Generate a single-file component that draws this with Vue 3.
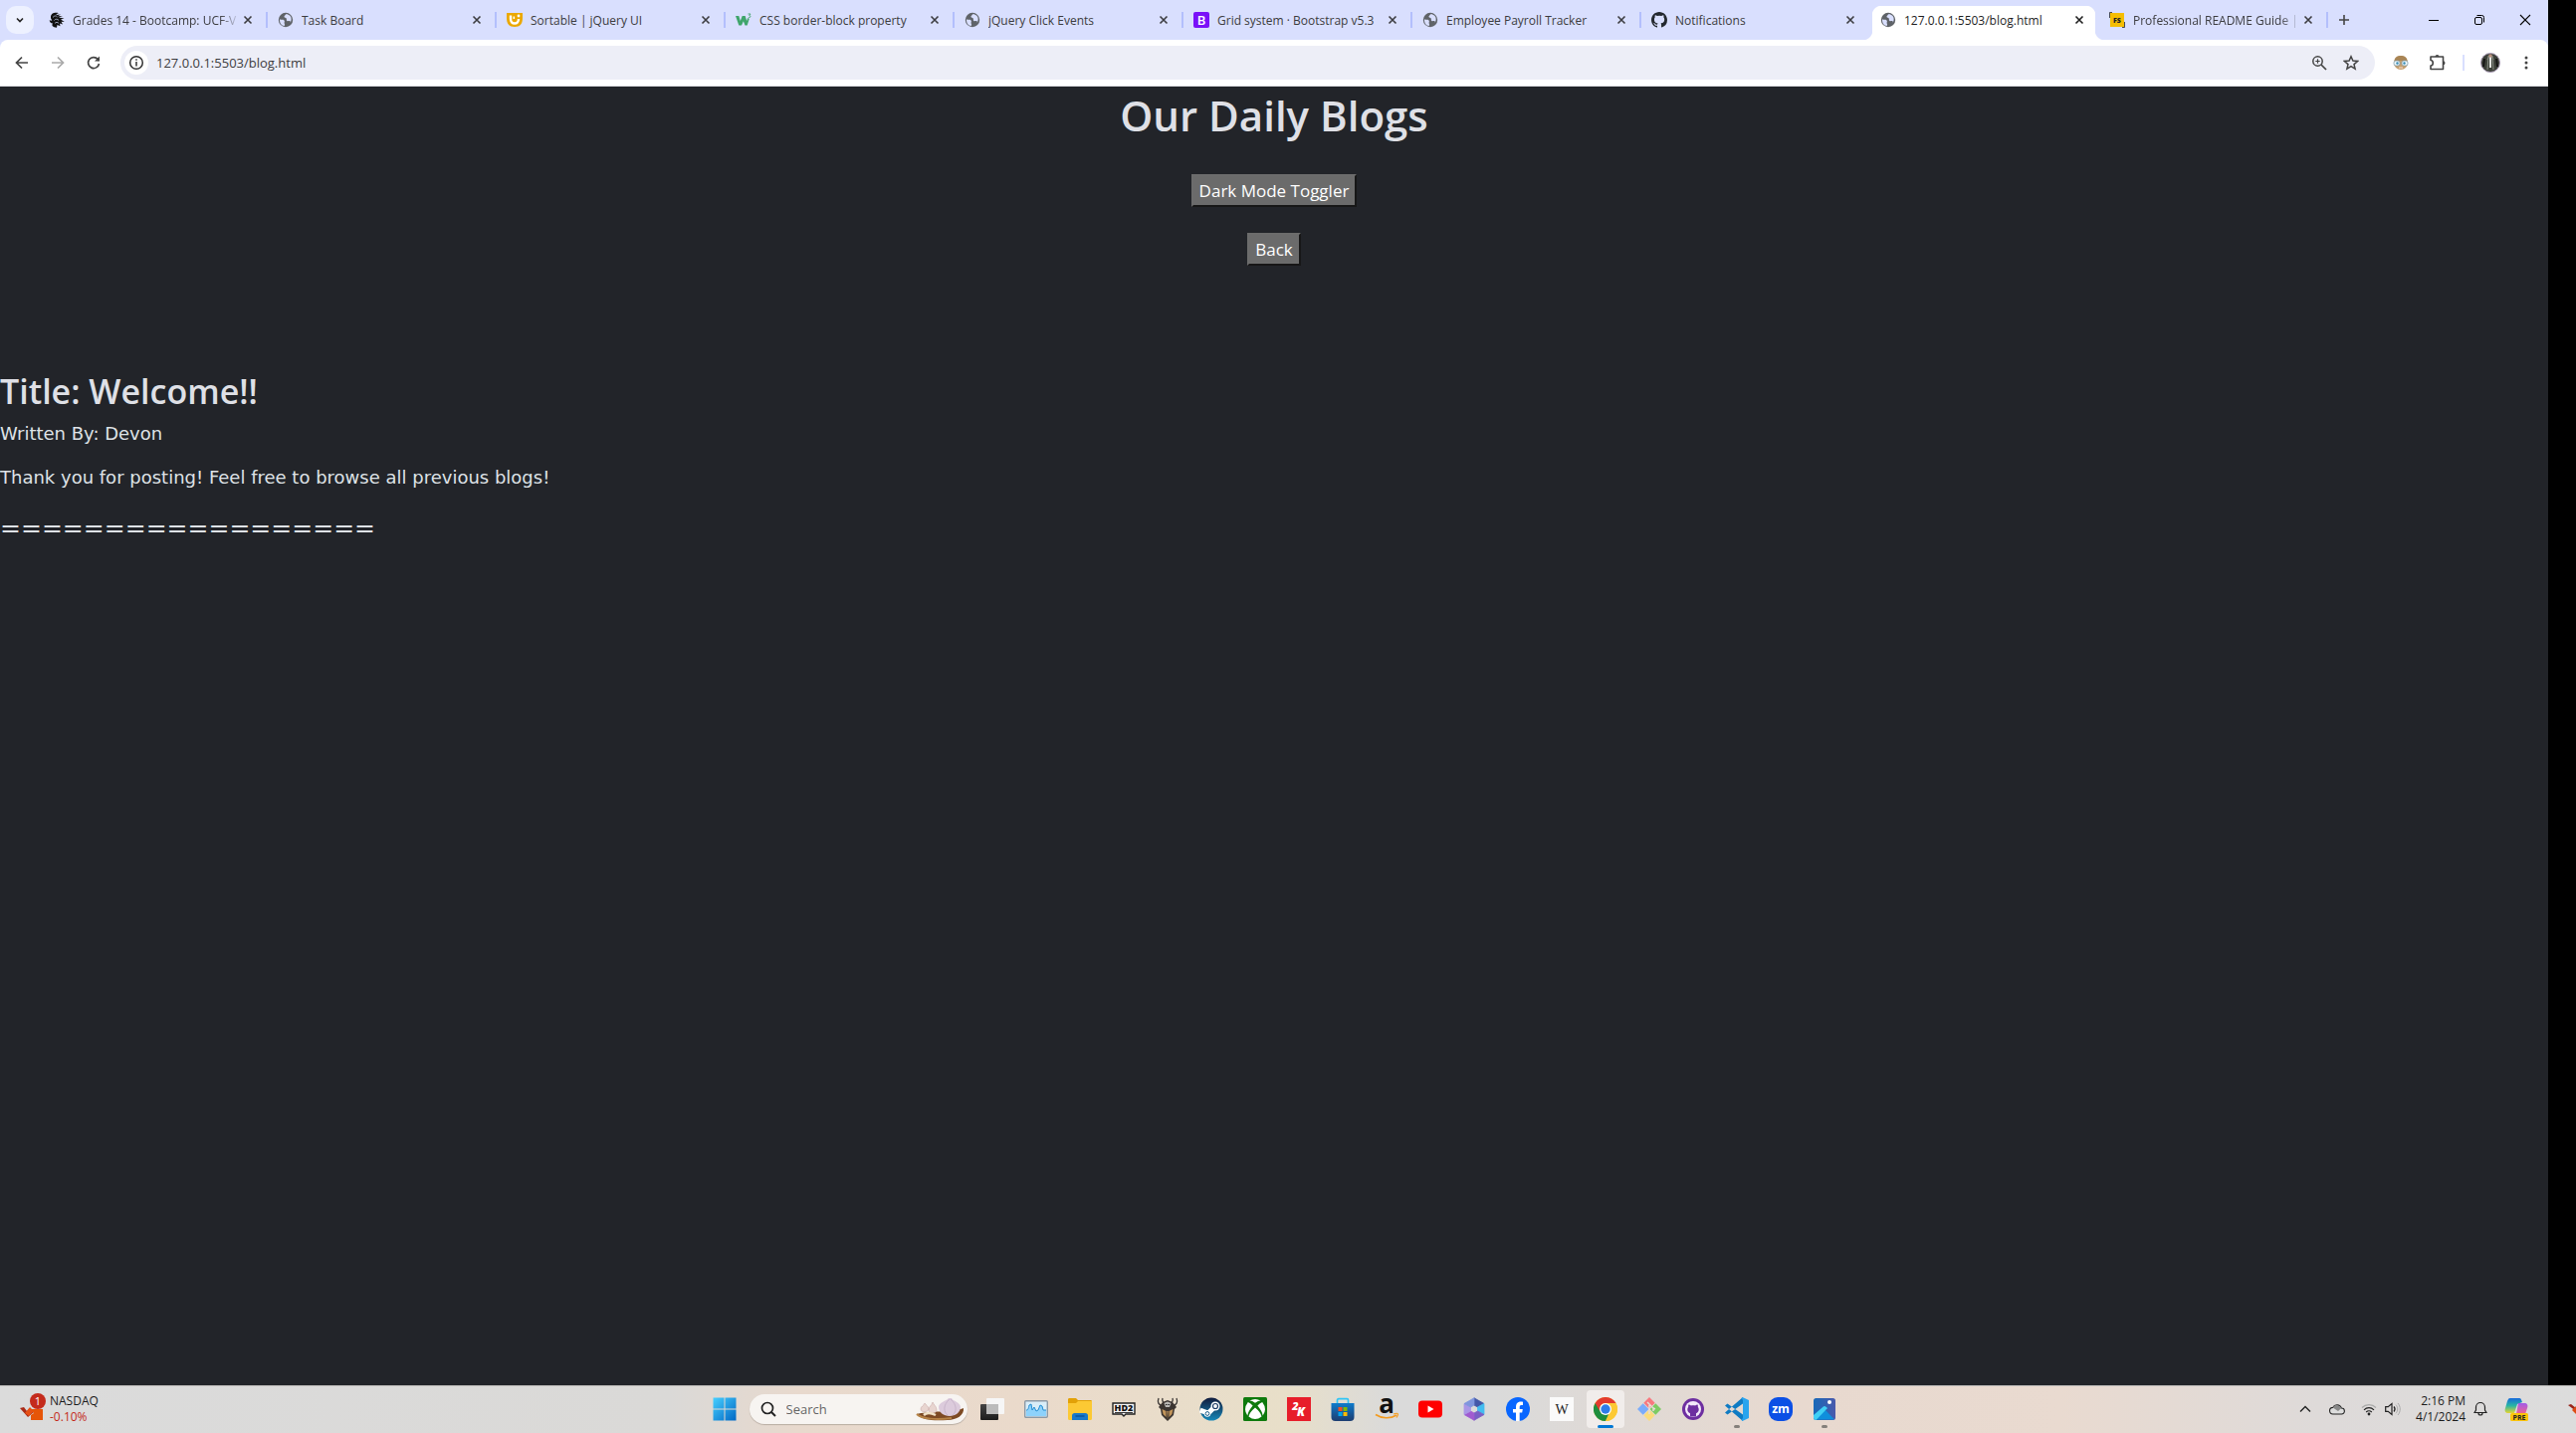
<script setup>
import { ref } from 'vue'

const globe = '<svg viewBox="0 0 16 16"><circle cx="8" cy="8" r="7.2" fill="#5f6368"/><path d="M2 7.2C3.6 8.4 5.4 7 6.6 8.6c.9 1.3-.6 2 .2 3.200.5.9.2 1.700-.2 2.300C3.800 13.600 1.700 11 2 7.200zM8.200 2.200c-.6 1.500-1.900 1.300-1.700 2.800.2 1.100 1.900.6 2.300 1.700.3 1-.3 1.500.6 2.200 1.100.7 1.900-.5 3 .3.5.4.4 1.200.2 1.700 1.500-2.200 1.500-5.200-.3-7.100-1.200-1.200-2.600-1.800-4.100-1.600z" fill="#d9dffe"/></svg>'

const tabs = [
  { title: 'Grades 14 - Bootcamp: UCF-V', clipped: true, icon: '<svg viewBox="0 0 16 16"><path d="M2 5C2 1.500 6 0 10 1.200 8.500 1.500 7.500 2.200 7.500 3L12 2.600 9 4.200 14 4 10 5.600 15.500 6.500 12 7.500 15.800 10 12.500 9.800 14 12.500 11 11.600 11.500 14.300 8.500 13 8 15.800C4 15.500 2.500 13.500 4 11.500 2 11.300.5 10 .8 8c1 .9 2 .7 2.500.2C2.300 7.300 1.900 6.200 2 5z" fill="#111"/><path d="M4 5.500c1.500-2 3.500-2 4.500-.5M5.500 8.500c1-1.800 3.500-1.600 4.500 0M6 11.500c1-1.500 3-1.500 4 0" stroke="#cfd5f2" stroke-width=".7" fill="none"/></svg>' },
  { title: 'Task Board', icon: globe },
  { title: 'Sortable | jQuery UI', icon: '<svg viewBox="0 0 16 16"><path d="M0 1h16v5c0 6-2.500 9-8 9S0 12 0 6z" fill="#eba800"/><path d="M4 3.500v3.500c0 3 1.500 4.500 4 4.500s4-1.500 4-4.500" stroke="#fff" stroke-width="2.400" fill="none"/><circle cx="12" cy="4" r="1.400" fill="#fff"/><path d="M7.300 4.500V7" stroke="#fff" stroke-width="1.500"/></svg>' },
  { title: 'CSS border-block property', icon: '<svg viewBox="0 0 16 16"><path d="M0 4h3.300l1.500 5L6.700 4h3l1.500 5 1-3 1.500 1-2 6.500H9.500L7.900 9.300l-1.900 4.200H3.300z" fill="#3fa56b"/><path d="M12.500 2h2.500l-1.200 1.700c1.600 0 1.500 2.300-.9 2" fill="none" stroke="#3fa56b" stroke-width=".9"/></svg>' },
  { title: 'jQuery Click Events', icon: globe },
  { title: 'Grid system · Bootstrap v5.3', icon: '<svg viewBox="0 0 16 16"><rect width="16" height="16" rx="2" fill="#7a11f8"/><text x="8" y="12.500" text-anchor="middle" font-family="Open Sans, sans-serif" font-size="13" font-weight="600" fill="#fff">B</text></svg>' },
  { title: 'Employee Payroll Tracker', icon: globe },
  { title: 'Notifications', icon: '<svg viewBox="0 0 16 16"><path fill="#24292f" d="M8 0C3.580 0 0 3.580 0 8c0 3.540 2.290 6.530 5.470 7.590.4.070.55-.17.55-.38v-1.500c-2.230.5-2.700-1-2.700-1-.36-.93-.9-1.200-.9-1.200-.7-.5.1-.5.1-.5.800.06 1.230.830 1.230.830.720 1.230 1.880.870 2.350.670.070-.53.280-.88.500-1.080-1.770-.2-3.640-.89-3.640-3.950 0-.87.310-1.590.820-2.150-.08-.2-.36-1.020.080-2.120 0 0 .67-.21 2.200.820a7.500 7.500 0 0 1 4 0c1.530-1.040 2.200-.82 2.200-.82.440 1.100.160 1.920.080 2.120.510.560.820 1.270.820 2.150 0 3.070-1.870 3.750-3.650 3.950.290.250.540.730.540 1.480v2.200c0 .210.150.460.550.380A8 8 0 0 0 16 8c0-4.420-3.580-8-8-8z"/></svg>' },
  { title: '127.0.0.1:5503/blog.html', active: true, icon: globe },
  { title: 'Professional README Guide |', clipped: true, icon: '<svg viewBox="0 0 16 16"><rect x="1" y="1" width="14" height="14" fill="#f5bd02"/><path d="M3 .5H.5V6M13 15.500h2.500V10" stroke="#222" stroke-width=".8" fill="none"/><text x="8" y="10.500" text-anchor="middle" font-family="Open Sans, sans-serif" font-size="7" font-weight="800" fill="#222">FS</text></svg>' },
]

const url = ref('127.0.0.1:5503/blog.html')
const dark = ref(true)

const apps = [
  { name: 'Task view', icon: '<svg viewBox="0 0 24 24"><defs><linearGradient id="tv" x2="0" y2="1"><stop stop-color="#444"/><stop offset="1" stop-color="#1c1c1c"/></linearGradient></defs><rect y="7" width="18" height="16" rx="1" fill="url(#tv)"/><rect x="6" y="1" width="18" height="16" rx="1" fill="#f6f6f6"/><path d="M6 7h12v10H6z" fill="#bbb"/></svg>' },
  { name: 'Task Manager', icon: '<svg viewBox="0 0 24 24"><rect x=".7" y="3.700" width="22.600" height="16.600" rx="1" fill="#d9edf8" stroke="#8d9aa5" stroke-width="1.400"/><path d="M2 13c2 0 2-1 3-5l2-1 1 6 2-3 2 4 2-1 2-5 2 1 1 4 3 0v6H2z" fill="#8ed2fb"/><path d="M2 13c2 0 2-1 3-5l2-1 1 6 2-3 2 4 2-1 2-5 2 1 1 4 3 0" fill="none" stroke="#258ed2"/></svg>' },
  { name: 'File Explorer', icon: '<svg viewBox="0 0 24 24"><path d="M0 2.500C0 1.500.5 1 1.500 1H8l2 2h12.500c1 0 1.500.5 1.500 1.500V9H0z" fill="#e2a106"/><path d="M0 6h8l2-2h14v17.500c0 .8-.5 1.500-1.500 1.500h-21C.5 23 0 22.300 0 21.500z" fill="#fcc934"/><path d="M4 23v-4.500C4 17 5 16 6.500 16h11c1.500 0 2.500 1 2.500 2.500V23z" fill="#1979c9"/><path d="M7.500 19h9" stroke="#0b559b" stroke-width="1.500"/></svg>' },
  { name: 'HELLDIVERS 2', icon: '<svg viewBox="0 0 24 24"><path d="M1 6h22v11h-9l-2 2-2-2H1z" fill="#f5f5f5" stroke="#222" stroke-width="1.400"/><text x="12" y="14" text-anchor="middle" font-family="Open Sans, sans-serif" font-size="9" font-weight="800" fill="#111">HD2</text><path d="M3 15.500h18" stroke="#222" stroke-width=".9"/></svg>' },
  { name: 'Game', icon: '<svg viewBox="0 0 24 24"><path d="M3 1c-1.500 4 0 7 4 8M21 1c1.500 4 0 7-4 8M7 1c-.5 2 0 4 2 5M17 1c.5 2 0 4-2 5" fill="none" stroke="#3b3634" stroke-width="1.300"/><path d="M7 5l5-2 5 2 4 5-2 2-1 6-6 6-6-6-1-6-2-2z" fill="#3b3430"/><path d="M6.500 12l4 2v6l-3-3zM17.500 12l-4 2v6l3-3zM11.300 14h1.400L12 23z" fill="#c2955a"/><path d="M8.500 6l3.500-1.500L15.500 6l-1.500 4h-4z" fill="#b9b6b3"/><path d="M10 7.500h1.500M12.500 7.500H14" stroke="#222"/></svg>' },
  { name: 'Steam', icon: '<svg viewBox="0 0 24 24"><defs><linearGradient id="st" x2="0" y2="1"><stop stop-color="#101a3b"/><stop offset="1" stop-color="#1788b9"/></linearGradient></defs><circle cx="12" cy="12" r="11.500" fill="url(#st)"/><path d="M.7 13l8 3M8 17l8-8" stroke="#fff" stroke-width="5" fill="none"/><circle cx="16" cy="9" r="4.500" fill="#fff"/><circle cx="16" cy="9" r="2.500" fill="#fff" stroke="#1c3c65" stroke-width="1.200"/><circle cx="8" cy="16.500" r="3.200" fill="#fff"/><circle cx="8" cy="16.500" r="1.900" fill="none" stroke="#1c5d88"/></svg>' },
  { name: 'Xbox', icon: '<svg viewBox="0 0 24 24"><rect width="24" height="24" rx="1.500" fill="#0e7a0d"/><path d="M6.500 3.500Q12 .5 17.500 3.500 15 3.500 12 5.800 9 3.500 6.500 3.500zM4.800 5Q7 5.500 9.600 8.500 5 14 4.300 18.500-.5 12 4.800 5zM19.200 5Q17 5.500 14.400 8.500 19 14 19.700 18.500 24.500 12 19.200 5zM12 10.500Q18 15.500 18.500 19.500 12 24.500 5.500 19.500 6 15.500 12 10.500z" fill="#fff"/></svg>' },
  { name: 'NBA 2K', icon: '<svg viewBox="0 0 24 24"><rect width="24" height="24" fill="#e71d2a"/><text x="8.500" y="12.500" text-anchor="middle" font-family="Open Sans, sans-serif" font-size="11" font-weight="800" font-style="italic" fill="#fff">2</text><text x="14" y="18.500" text-anchor="middle" font-family="Open Sans, sans-serif" font-size="12" font-weight="800" font-style="italic" fill="#fff">K</text></svg>' },
  { name: 'Microsoft Store', icon: '<svg viewBox="0 0 24 24"><defs><linearGradient id="ms" x2="0" y2="1"><stop stop-color="#0e7bcb"/><stop offset="1" stop-color="#1d3d70"/></linearGradient></defs><path d="M6.500 7V3c0-.8.5-1.300 1.300-1.300h8.400c.8 0 1.300.5 1.300 1.300v4" fill="none" stroke="#30c5f5" stroke-width="1.700"/><path d="M.5 6h23v14a4 4 0 0 1-4 4h-15a4 4 0 0 1-4-4z" fill="url(#ms)"/><path d="M7.500 10h4v4h-4z" fill="#f25022"/><path d="M12.500 10h4v4h-4z" fill="#7fba00"/><path d="M7.500 15h4v4h-4z" fill="#00a4ef"/><path d="M12.500 15h4v4h-4z" fill="#ffb900"/></svg>' },
  { name: 'Amazon', icon: '<svg viewBox="0 0 24 24"><text x="12" y="16" text-anchor="middle" font-family="Open Sans, sans-serif" font-size="26" font-weight="700" fill="#111">a</text><path d="M1 17.500c6 4 15 4.500 21 .5" stroke="#f39b1f" stroke-width="1.600" fill="none"/><path d="M19 17c2-.7 4-.8 4.300-.3.300.6-.3 2.300-1.300 3.800" stroke="#f39b1f" stroke-width="1.200" fill="none"/></svg>' },
  { name: 'YouTube', icon: '<svg viewBox="0 0 24 24"><rect y="3.500" width="24" height="17" rx="4" fill="#f00"/><path d="M9.500 8.500l6 3.500-6 3.500z" fill="#fff"/></svg>' },
  { name: 'Microsoft 365', icon: '<svg viewBox="0 0 24 24"><g stroke-width=".8" stroke-linejoin="round"><path d="M12 .8L22 6.500l-6.500 3.500L12 8z" fill="#4358a8" stroke="#4358a8"/><path d="M22 6.500v11L15.500 14v-4z" fill="#43bdf0" stroke="#43bdf0"/><path d="M22 17.500L12 23.200V16l3.500-2z" fill="#7a5fc4" stroke="#7a5fc4"/><path d="M12 23.200L2 17.500 8.500 14l3.500 2z" fill="#a05bd0" stroke="#a05bd0"/><path d="M2 17.500v-11L8.500 10v4z" fill="#a996e6" stroke="#a996e6"/><path d="M2 6.500L12 .8V8l-3.500 2z" fill="#7f95dd" stroke="#7f95dd"/></g></svg>' },
  { name: 'Facebook', icon: '<svg viewBox="0 0 24 24"><circle cx="12" cy="12" r="12" fill="#0866ff"/><path d="M10 24v-8.500H7V12h3v-2c0-4 1.800-5.500 5-5.500.9 0 1.500.1 2 .2V8c-2.500-.2-3.300.3-3.300 2v2h3.100l-.6 3.500h-2.500V24z" fill="#fff"/></svg>' },
  { name: 'Wikipedia', icon: '<svg viewBox="0 0 24 24"><rect width="24" height="24" fill="#fafafa"/><text x="12" y="17" text-anchor="middle" font-family="Liberation Serif, serif" font-size="14" fill="#222">W</text></svg>' },
  { name: 'Google Chrome', active: true, icon: '<svg viewBox="0 0 24 24"><circle cx="12" cy="12" r="12" fill="#fcc934"/><path d="M12 12L1.600 6A12 12 0 0 0 12 24l5.200-9z" fill="#1e8e3e"/><path d="M12 12h5.200L12 24A12 12 0 0 0 22.400 6H12z" fill="#fcc934"/><path d="M1.600 6A12 12 0 0 1 22.400 6H12a6 6 0 0 0-5.200 9z" fill="#e33b2e"/><circle cx="12" cy="12" r="6" fill="#fff"/><circle cx="12" cy="12" r="4.700" fill="#2e7de9"/></svg>' },
  { name: 'Git Bash', icon: '<svg viewBox="0 0 24 24"><path d="M12 0l5.700 5.700L12 11.400 6.300 5.700z" fill="#f8787e"/><path d="M18.300 6.300L24 12l-5.700 5.700-5.700-5.700z" fill="#7dcb63"/><path d="M12 12.600l5.700 5.700L12 24l-5.700-5.700z" fill="#fbdc7c"/><path d="M5.700 6.300l5.700 5.700-5.700 5.700L0 12z" fill="#7bacfa"/><path d="M10 5l6 6v3M16 11l2 1M12 8v9" stroke="#e6dbd6" stroke-width="1.500" fill="none"/></svg>' },
  { name: 'GitHub Desktop', icon: '<svg viewBox="0 0 24 24"><circle cx="12" cy="12" r="11" fill="#6d2ea0"/><circle cx="12" cy="12" r="8" fill="#f3e9fa"/><path d="M9 19.500v-3.300c-2-.8-2.700-2-2.700-3.900 0-1 .3-1.800.9-2.500-.2-.8-.1-1.600.2-2.400 1 0 1.800.5 2.500 1 1.400-.3 2.800-.3 4.200 0 .7-.5 1.500-1 2.500-1 .3.800.4 1.600.2 2.400.6.7.9 1.500.9 2.500 0 1.900-.7 3.100-2.700 3.900v3.300z" fill="#6d2ea0"/></svg>' },
  { name: 'Visual Studio Code', open: true, icon: '<svg viewBox="0 0 24 24"><path d="M0 8.500L2.500 6.500 18 17.500V24zM0 15.500l2.500 2L18 6.500V0z" fill="#0f7bc3"/><path d="M17.500 0L24 3v18l-6.500 3-1-1 1.500-2V3l-1.500-2z" fill="#29a4ee"/></svg>' },
  { name: 'Zoom', icon: '<svg viewBox="0 0 24 24"><rect width="24" height="24" rx="9" fill="#0b4fe5"/><text x="12" y="16" text-anchor="middle" font-family="Open Sans, sans-serif" font-size="12" font-weight="700" fill="#fff">zm</text></svg>' },
  { name: 'Photos', open: true, icon: '<svg viewBox="0 0 24 24"><defs><linearGradient id="ph" x2="1"><stop stop-color="#1768b8"/><stop offset="1" stop-color="#4a5aac"/></linearGradient></defs><rect x="1" y="1" width="22" height="22" rx="2.500" fill="url(#ph)"/><path d="M2.500 22.500L12 12l10 10.500z" fill="#0f8fdc"/><path d="M1 18l9.500-8.300c1-.8 2-.8 3 0L15 11 3.500 23C2 23 1 22 1 20.500z" fill="#40d0f5"/><circle cx="17" cy="5" r="2" fill="#fff"/></svg>' },
]
</script>

<template>
  <div class="screen">
    <div class="desktop">
      <div class="browser">
        <header class="tabstrip">
          <button class="tab-search" aria-label="Search tabs">
            <svg width="8" height="8" viewBox="0 0 8 8"><path d="M1 2.500l3 3 3-3" fill="none" stroke="#222" stroke-width="1.600" /></svg>
          </button>
          <nav class="tabs">
            <div v-for="tab in tabs" :key="tab.title" class="tab" :class="{ active: tab.active, clipped: tab.clipped }">
              <button class="tab-main">
                <span class="favicon" v-html="tab.icon"></span>
                <span class="tab-title">{{ tab.title }}</span>
              </button>
              <button class="tab-close" aria-label="Close tab">
                <svg width="10" height="10" viewBox="0 0 10 10"><path d="M1.500 1.500l7 7m0-7l-7 7" stroke="currentColor" stroke-width="1.600" /></svg>
              </button>
            </div>
          </nav>
          <button class="new-tab" aria-label="New tab">
            <svg width="12" height="12" viewBox="0 0 12 12"><path d="M6 1v10M1 6h10" stroke="#444" stroke-width="1.600" /></svg>
          </button>
          <div class="window-controls">
            <button aria-label="Minimize"><svg width="12" height="12" viewBox="0 0 12 12"><path d="M1 6.500h10" stroke="#000" /></svg></button>
            <button aria-label="Restore"><svg width="12" height="12" viewBox="0 0 12 12"><rect x="1.500" y="3.500" width="7" height="7" rx="1.500" fill="none" stroke="#000" /><path d="M3.500 1.500H8.500a2 2 0 0 1 2 2V8.500" fill="none" stroke="#000" /></svg></button>
            <button aria-label="Close"><svg width="12" height="12" viewBox="0 0 12 12"><path d="M1 1l10 10M11 1L1 11" stroke="#000" stroke-width="1.100" /></svg></button>
          </div>
        </header>

        <div class="toolbar">
          <div class="nav-buttons">
            <button aria-label="Back"><svg width="16" height="16" viewBox="0 0 16 16"><path d="M14 8H3M8 2.500L2.500 8 8 13.500" fill="none" stroke="#444" stroke-width="1.700" /></svg></button>
            <button aria-label="Forward"><svg width="16" height="16" viewBox="0 0 16 16"><path d="M2 8h11M8 2.500L13.500 8 8 13.500" fill="none" stroke="#aaa" stroke-width="1.700" /></svg></button>
            <button aria-label="Reload"><svg width="16" height="16" viewBox="0 0 16 16"><path d="M13.500 9a5.500 5.500 0 1 1-1.300-4.600L13.500 6" fill="none" stroke="#444" stroke-width="1.700" /><path d="M14 1.500V6.500H9z" fill="#444" /></svg></button>
          </div>
          <div class="omnibox">
            <button class="site-info" aria-label="View site information">
              <svg width="16" height="16" viewBox="0 0 16 16"><circle cx="8" cy="8" r="6.300" fill="none" stroke="#333" stroke-width="1.500" /><path d="M8 7v4.500M8 4.300v1.500" stroke="#333" stroke-width="1.500" /></svg>
            </button>
            <input v-model="url" class="address" aria-label="Address" />
            <button aria-label="Zoom"><svg width="16" height="16" viewBox="0 0 16 16"><circle cx="6.500" cy="6.500" r="4.700" fill="none" stroke="#444" stroke-width="1.500" /><path d="M10 10l5 5" stroke="#444" stroke-width="1.700" /><path d="M6.500 4.300v4.400M4.300 6.500h4.400" stroke="#444" stroke-width="1.200" /></svg></button>
            <button aria-label="Bookmark"><svg width="16" height="16" viewBox="0 0 16 16"><path d="M8 1.800l1.900 4.300 4.700.4-3.600 3.100 1.100 4.600L8 11.700l-4.100 2.500L5 9.600 1.400 6.500l4.700-.4z" fill="none" stroke="#444" stroke-width="1.500" /></svg></button>
          </div>
          <div class="extensions">
            <button aria-label="Extension">
              <svg width="16" height="16" viewBox="0 0 16 16"><circle cx="8" cy="8" r="7" fill="#c5a06f" /><path d="M1.500 6C2 2 5 1 8 1s6 1 6.500 5z" fill="#a98555" /><rect x="1" y="6" width="6" height="5" rx="2" fill="#eef7fb" stroke="#7b98a8" stroke-width=".7" /><rect x="9" y="6" width="6" height="5" rx="2" fill="#eef7fb" stroke="#7b98a8" stroke-width=".7" /><circle cx="4.500" cy="8.500" r="1.200" fill="#378cb4" /><circle cx="11.500" cy="8.500" r="1.200" fill="#378cb4" /><path d="M6 13h4" stroke="#e7c9b0" stroke-width="1.500" /></svg>
            </button>
            <button aria-label="Extensions"><svg width="18" height="18" viewBox="0 0 18 18"><path d="M2 3h12.500v12.500H2V12c3 0 3-5.500 0-5.500z" fill="none" stroke="#444" stroke-width="1.600" stroke-linejoin="round" /><path d="M6.500 3a2 2 0 0 1 4 0zM14.500 7.200a2 2 0 0 1 0 4z" fill="#444" /></svg></button>
          </div>
          <span class="divider"></span>
          <button class="profile" aria-label="Profile">
            <svg width="20" height="20" viewBox="0 0 20 20"><circle cx="10" cy="10" r="9.500" fill="#3c4038" stroke="#a99bb5" /><path d="M7 7l2-4M13 7l-2-4M8 3l-1 14M12 3l1 14" stroke="#8b9088" stroke-width="1" /><path d="M10 2v13" stroke="#e2e4e0" stroke-width="2" /><path d="M4 6l-1 8M16 6l1 8" stroke="#151515" stroke-width="2" /><circle cx="10" cy="3" r="1.800" fill="#b58f7d" /></svg>
          </button>
          <button class="menu" aria-label="Menu"><svg width="4" height="16" viewBox="0 0 4 16"><g fill="#444"><circle cx="2" cy="3" r="1.500" /><circle cx="2" cy="8" r="1.500" /><circle cx="2" cy="13" r="1.500" /></g></svg></button>
        </div>

        <main class="page">
          <div class="intro">
            <h1>Our Daily Blogs</h1>
            <button class="page-button" @click="dark = !dark">Dark Mode Toggler</button>
            <button class="page-button">Back</button>
          </div>
          <article class="post">
            <h2>Title: Welcome!!</h2>
            <p>Written By: Devon</p>
            <p>Thank you for posting! Feel free to browse all previous blogs!</p>
            <p class="rule">==================</p>
          </article>
        </main>
      </div>
    </div>

    <footer class="taskbar">
      <button class="widget">
        <span class="widget-icon">
          <svg width="26" height="24" viewBox="0 0 26 24"><path d="M1 11l4-1 3 4 3-3 4 4-6 5z" fill="#a92b17" /><path d="M6 16l5-6 4 4-5 5z" fill="#e65014" /><path d="M12 23V18l3-2-3-4h12v11z" fill="#e65508" /></svg>
          <span class="badge">1</span>
        </span>
        <span class="widget-text">NASDAQ<span class="loss">-0.10%</span></span>
      </button>

      <div class="apps">
        <button class="app" aria-label="Start">
          <svg width="24" height="24" viewBox="0 0 24 24"><defs><linearGradient id="win" x2="1" y2="1"><stop stop-color="#48d0ff" /><stop offset="1" stop-color="#0067c4" /></linearGradient></defs><path d="M.5.500h11v11H.5zM12.500.500h11v11h-11zM.5 12.500h11v11H.5zM12.500 12.500h11v11h-11z" fill="url(#win)" /></svg>
        </button>
        <label class="search">
          <svg width="16" height="16" viewBox="0 0 16 16"><circle cx="7" cy="7" r="5.500" fill="none" stroke="#222" stroke-width="1.700" /><path d="M11 11l4 4" stroke="#222" stroke-width="2" /></svg>
          <input type="search" placeholder="Search" aria-label="Search" />
          <svg width="50" height="26" viewBox="0 0 50 26"><path d="M1 18c10-3 38-2 47-6 1 7-7 12-16 12-15 1-26 0-31-6z" fill="#7d4a24" /><path d="M1 18c5 5 20 6 35 4" fill="none" stroke="#b58246" stroke-width="2" /><path d="M5 13c0-3 3-3 4-6 1 2 4 3 4 6s-8 4-8 0zM13 14c0-4 3-4 4-8 1 3 4 4 4 8s-8 4-8 0z" fill="#e8d5d0" stroke="#c9aba9" stroke-width=".6" /><path d="M23 11c0-5 8-6 10-9h3c1 3 9 4 9 9s-5 9-11 9-11-4-11-9z" fill="#dccbdc" /><path d="M34 3c-7 6-6 13-2 16M35 3c7 6 6 13 2 16" fill="none" stroke="#c3aec5" stroke-width=".8" /><path d="M8 19c3-3 8-2 12 0" stroke="#f1e2c8" stroke-width="2.500" fill="none" /></svg>
        </label>
        <button v-for="app in apps" :key="app.name" class="app" :class="{ active: app.active, open: app.open }" :aria-label="app.name">
          <span class="app-icon" v-html="app.icon"></span>
        </button>
      </div>

      <div class="tray">
        <button aria-label="Show hidden icons"><svg width="12" height="12" viewBox="0 0 12 12"><path d="M1 8.500l5-5 5 5" fill="none" stroke="#222" stroke-width="1.400" /></svg></button>
        <button aria-label="OneDrive"><svg width="16" height="12" viewBox="0 0 16 12"><path d="M4 11a3.300 3.300 0 0 1-.3-6.600A4.700 4.700 0 0 1 12.300 5 3 3 0 0 1 12.500 11z" fill="#ddd" stroke="#222" stroke-width="1.100" /><path d="M3.700 4.400A4.700 4.700 0 0 1 12.300 5L9 8z" fill="#888" /></svg></button>
        <button class="net">
          <svg width="16" height="16" viewBox="0 0 16 16" aria-label="Wi-Fi"><g fill="none" stroke-width="1.200"><path d="M1 6.500a10 10 0 0 1 14 0" stroke="#aaa" /><path d="M3 8.800a7 7 0 0 1 10 0M5.200 11a4 4 0 0 1 5.600 0" stroke="#222" /></g><circle cx="8" cy="13" r="1.400" fill="#222" /></svg>
          <svg width="16" height="16" viewBox="0 0 16 16" aria-label="Volume"><path d="M.7 5.700h2.500L7 2.500v11l-3.800-3.200H.7z" fill="none" stroke="#222" stroke-width="1.200" /><path d="M9 5.500c1.300 1.500 1.300 3.500 0 5" fill="none" stroke="#222" stroke-width="1.200" /><path d="M11 3.700c2.300 2.500 2.300 6 0 8.600M13 2c3 3.500 3 8.500 0 12" fill="none" stroke="#aaa" /></svg>
        </button>
        <button class="clock"><span>2:16 PM</span><span>4/1/2024</span></button>
        <button class="bell" aria-label="Notifications"><svg width="14" height="16" viewBox="0 0 14 16"><path d="M1 11.500L2.500 9V6a4.500 4.500 0 0 1 9 0v3l1.500 2.500zM5 12a2 2 0 0 0 4 0" fill="none" stroke="#222" stroke-width="1.200" /></svg></button>
        <button class="copilot" aria-label="Copilot">
          <svg width="24" height="24" viewBox="0 0 24 24"><defs><linearGradient id="cp" x2="0" y2="1"><stop stop-color="#1769da" /><stop offset=".5" stop-color="#28b5a5" /><stop offset="1" stop-color="#e8d530" /></linearGradient><linearGradient id="cq" x2="0" y2="1"><stop stop-color="#a15bea" /><stop offset="1" stop-color="#f2668b" /></linearGradient></defs><path d="M6 1h9c2 0 2 2 3 4l-5 2-3 9H4c-3 0-4-2-3-5l2-7c1-2 1-3 3-3z" fill="url(#cp)" /><path d="M14 6h6c3 0 4 2 3 5l-2 6h-9z" fill="url(#cq)" /><rect x="6" y="16" width="18" height="8" rx="1.500" fill="#fdc50a" /><text x="15" y="22.500" text-anchor="middle" font-family="Open Sans, sans-serif" font-size="7" font-weight="700" fill="#222">PRE</text></svg>
        </button>
        <svg class="next-widget" width="8" height="12" viewBox="0 0 8 12"><path d="M0 2l3-1 5 4v3z" fill="#98251a" /><path d="M4 7l4-4v8z" fill="#dd4c14" /></svg>
      </div>
    </footer>
  </div>
</template>

<style>
body {
  margin: 0;
  background: #000;
}
</style>

<style scoped>
.screen {
  display: flex;
  flex-direction: column;
  min-height: 100vh;
  font-family: "Open Sans", "Noto Sans", sans-serif;
  font-size: 12px;
  color: #3c3c40;
}
button {
  display: flex;
  align-items: center;
  justify-content: center;
  flex-shrink: 0;
  padding: 0;
  border: 0;
  background: none;
  font: inherit;
  color: inherit;
}
svg {
  display: block;
  flex-shrink: 0;
}
input {
  min-width: 0;
  padding: 0;
  border: 0;
  outline: 0;
  background: none;
  font: inherit;
}
.desktop {
  display: flex;
  flex: 1;
  padding-right: 28px;
  background: #000;
}
.browser {
  display: flex;
  flex: 1;
  flex-direction: column;
  min-width: 0;
  background: #d9dffe;
}

.tabstrip {
  display: flex;
  align-items: center;
  height: 40px;
  padding-left: 6px;
}
.tab-search {
  width: 28px;
  height: 28px;
  margin-right: 4px;
  border-radius: 10px;
  background: #edf1ff;
}
.tabs {
  display: flex;
  flex: 0 1 2300px;
  min-width: 0;
}
.tab {
  position: relative;
  display: flex;
  flex: 1;
  align-items: center;
  min-width: 0;
  height: 40px;
  padding: 0 11px;
}
.tab::after {
  content: "";
  position: absolute;
  top: 12px;
  right: -1px;
  width: 2px;
  height: 16px;
  background: #b3bffc;
}
.tab.active::after,
.tab:has(+ .active)::after {
  display: none;
}
.tab.active {
  color: #1f1f1f;
}
.tab.active::before {
  content: "";
  position: absolute;
  inset: 6px -7px 0;
  background:
    radial-gradient(circle at 0 0, transparent 10px, #fff 11px) 0 100% / 10px 10px no-repeat,
    radial-gradient(circle at 100% 0, transparent 10px, #fff 11px) 100% 100% / 10px 10px no-repeat,
    linear-gradient(#fff, #fff) 50% 100% / calc(100% - 20px) calc(100% - 10px) no-repeat,
    radial-gradient(circle at 10px 10px, #fff 10px, transparent 11px) 10px 0 / 10px 10px no-repeat,
    radial-gradient(circle at 0 10px, #fff 10px, transparent 11px) calc(100% - 10px) 0 / 10px 10px no-repeat,
    linear-gradient(#fff, #fff) 50% 0 / calc(100% - 40px) 10px no-repeat;
}
.tab-main {
  position: relative;
  flex: 1;
  justify-content: flex-start;
  gap: 8px;
  min-width: 0;
}
.favicon {
  flex: 0 0 16px;
  height: 16px;
}
.tab-title {
  flex: 1;
  overflow: hidden;
  text-align: left;
  white-space: nowrap;
}
.clipped .tab-title {
  mask-image: linear-gradient(90deg, #000 calc(100% - 20px), transparent);
}
.tab-close {
  position: relative;
  width: 16px;
  height: 16px;
}
.new-tab {
  width: 34px;
  height: 28px;
}
.window-controls {
  display: flex;
  margin-left: auto;
}
.window-controls button {
  width: 46px;
  height: 40px;
}

.toolbar {
  display: flex;
  align-items: center;
  height: 46px;
  padding: 0 20px 0 4px;
  border-bottom: 1px solid #dcdce0;
  border-radius: 8px 8px 0 0;
  background: #fff;
}
.nav-buttons {
  display: flex;
  margin-right: 9px;
}
.nav-buttons button {
  width: 36px;
  height: 34px;
}
.omnibox {
  display: flex;
  flex: 1;
  align-items: center;
  gap: 16px;
  height: 34px;
  padding: 0 16px 0 4px;
  border-radius: 17px;
  background: #edeef7;
}
.site-info {
  width: 24px;
  height: 24px;
  border-radius: 50%;
  background: #fff;
}
.address {
  flex: 1;
  margin-left: -8px;
  font-size: 13px;
  color: #3c3c40;
}
.extensions {
  display: flex;
  align-items: center;
  gap: 20px;
  margin-left: 18px;
}
.divider {
  width: 2px;
  height: 16px;
  margin: 0 16px;
  background: #d9dffe;
}
.menu {
  margin-left: 24px;
}

.page {
  flex: 1;
  background: #222429;
  color: #dee2e6;
}
.intro {
  display: flex;
  flex-direction: column;
  align-items: center;
  gap: 26px;
}
h1,
h2 {
  margin: 0;
  font-weight: 600;
  color: #dfe0e6;
}
h1 {
  margin-bottom: 4px;
  font-size: 42px;
  line-height: 58px;
}
.page-button {
  height: 33px;
  padding: 0 6px;
  border: 2px outset #6c6c6c;
  background: #6b6b6b;
  font-size: 17px;
  color: #fff;
}
.post {
  margin-top: 105px;
  font-family: "DejaVu Sans", Verdana, sans-serif;
  font-size: 18px;
  line-height: 26px;
}
h2 {
  margin-bottom: 9px;
  font-family: "Open Sans", sans-serif;
  font-size: 34px;
  line-height: 42px;
}
p {
  margin: 0 0 18px;
}
.rule {
  font-size: 25px;
  line-height: 40px;
}

.taskbar {
  display: grid;
  grid-template-columns: 1fr auto 1fr;
  align-items: center;
  height: 46px;
  padding: 0 28px 1px 0;
  border-top: 1px solid #bcbab8;
  background: linear-gradient(90deg, #dbdbdb 0, #dad9d7 26%, #e8d9cd 31%, #eadacb 40%, #e8dfc9 50%, #dadada 54%, #dadada 58%, #e8d9cf 70%, #e9dad0 80%, #dedad9 90%, #dcdcdc 100%);
  color: #1c1c1c;
}
.widget {
  justify-self: start;
  gap: 5px;
  margin-left: 19px;
  line-height: 16px;
  text-align: left;
}
.widget-icon {
  position: relative;
}
.badge {
  position: absolute;
  top: -4px;
  left: 11px;
  width: 16px;
  height: 16px;
  border-radius: 50%;
  background: #c42b1c;
  font-size: 11px;
  line-height: 16px;
  text-align: center;
  color: #fff;
}
.loss {
  display: block;
  color: #c42b1c;
}
.apps {
  display: flex;
  align-items: center;
}
.app {
  position: relative;
  width: 38px;
  height: 38px;
  margin: 0 3px;
  border-radius: 4px;
}
.app-icon {
  width: 24px;
  height: 24px;
}
.app.active {
  background: #f1edeb;
}
.app.active::after,
.app.open::after {
  content: "";
  position: absolute;
  bottom: 0;
  left: 16px;
  width: 6px;
  height: 3px;
  border-radius: 2px;
  background: #85807b;
}
.app.active::after {
  left: 11px;
  width: 16px;
  background: #0078d4;
}
.search {
  display: flex;
  align-items: center;
  gap: 10px;
  width: 206px;
  height: 30px;
  margin: 0 3px;
  padding: 0 2px 0 11px;
  border-radius: 15px;
  background: #f7f4f1;
  box-shadow: 0 1px 1px #b9aea4;
}
.search input {
  flex: 1;
  font-size: 13px;
}
.search input::placeholder {
  color: #666;
  opacity: 1;
}
.tray {
  display: flex;
  align-items: center;
  justify-self: end;
}
.tray button + button {
  margin-left: 18px;
}
.tray button + .net {
  gap: 8px;
  margin-left: 16px;
}
.tray button + .clock {
  flex-direction: column;
  align-items: flex-end;
  margin-left: 15px;
  line-height: 16px;
}
.tray button + .bell {
  margin-left: 8px;
}
.tray button + .copilot {
  margin-left: 17px;
}
.next-widget {
  margin: 0 -28px 0 40px;
}
</style>
